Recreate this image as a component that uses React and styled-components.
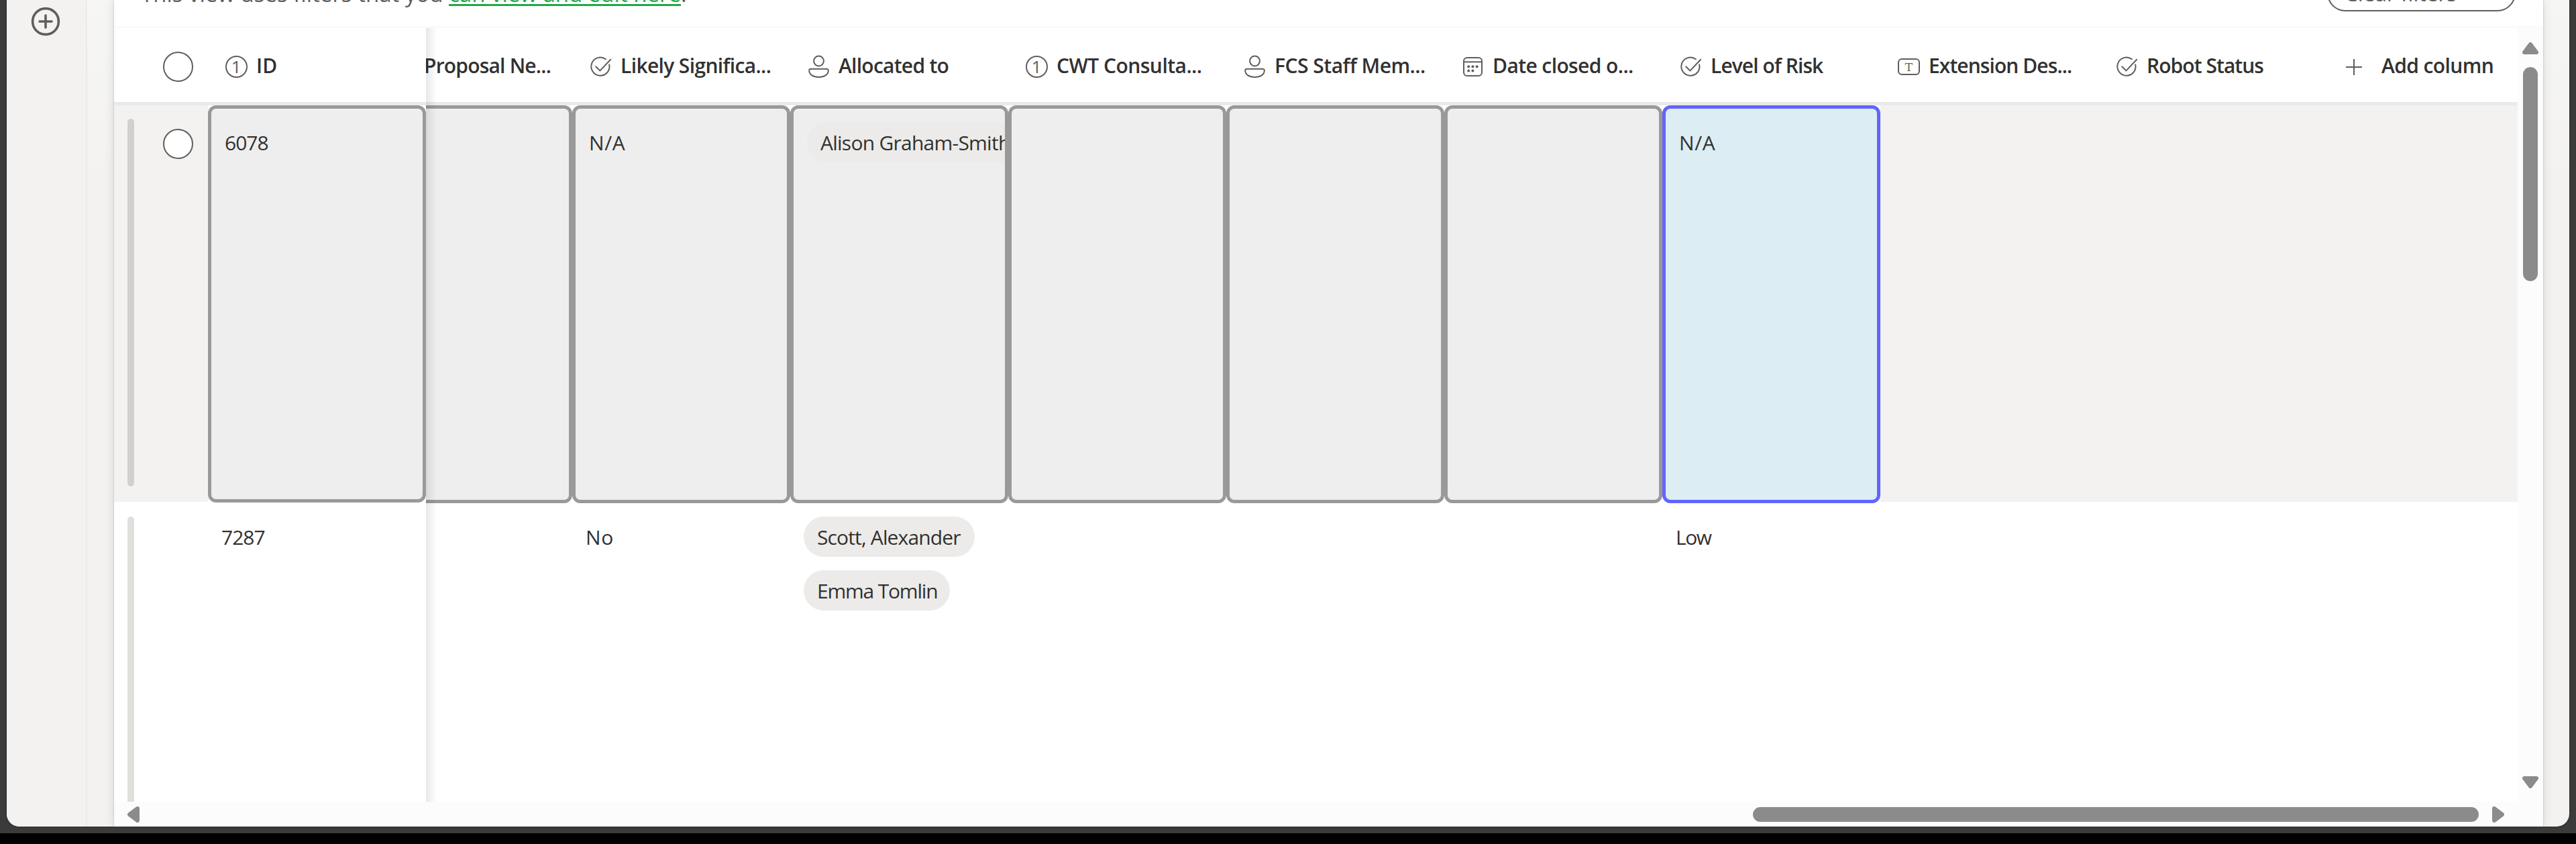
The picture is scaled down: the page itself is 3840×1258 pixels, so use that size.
import React from "react";
import styled, { createGlobalStyle } from "styled-components";

const ink = "#323130";
const muted = "#605e5c";
const surface = "#f3f2f1";

const GlobalStyle = createGlobalStyle`
  * { box-sizing: border-box; }
  body {
    margin: 0;
    background: #000;
    font-family: "Open Sans", "Noto Sans", sans-serif;
    color: ${ink};
  }
`;

const Desktop = styled.div`
  width: 3840px;
  height: 1258px;
  padding-bottom: 16px;
  background: #000;
  overflow: hidden;
`;

const Frame = styled.div`
  height: 1242px;
  padding: 0 10px 10px;
  background: #3b3b3b;
`;

const Window = styled.div`
  display: flex;
  height: 1232px;
  border-radius: 0 0 19px 19px;
  background: linear-gradient(#f6f6f4, ${surface} 260px);
  box-shadow: 0 0 3px rgba(0, 0, 0, 0.5);
  overflow: hidden;
`;

const Rail = styled.nav`
  display: flex;
  justify-content: center;
  align-items: flex-start;
  width: 120px;
  margin-right: 40px;
  padding-top: 10px;
  background: ${surface};
  border-right: 2px solid #eceae8;
`;

const Panel = styled.main`
  display: flex;
  flex-direction: column;
  width: 3621px;
  background: #fff;
  box-shadow: 0 0 2px rgba(0, 0, 0, 0.25), 0 0 14px rgba(0, 0, 0, 0.12);
`;

const FilterBar = styled.div`
  display: flex;
  justify-content: space-between;
  align-items: flex-start;
  height: 42px;
  padding: 0 41px 0 40px;
  background: linear-gradient(#fff 38px, #f7f7f7);
  overflow: hidden;
`;

const FilterText = styled.p`
  margin: -31px 0 0;
  font-size: 33px;
  line-height: 44px;
  white-space: pre;
  color: ${muted};
`;

const FilterLink = styled.a`
  display: inline-block;
  height: 40px;
  border-bottom: 3px solid #22a84b;
  color: #22a84b;
  line-height: 44px;
`;

const ClearButton = styled.button`
  width: 281px;
  height: 54px;
  margin-top: -37px;
  padding: 0 0 0 24px;
  border: 2px solid ${muted};
  border-radius: 27px;
  background: #fff;
  color: ${muted};
  font: 31.5px/48px "Open Sans", sans-serif;
  text-align: left;
`;

const Viewport = styled.div`
  display: flex;
  height: 1153px;
`;

const Sheet = styled.div`
  width: 3583px;
  height: 1153px;
  overflow: hidden;
`;

const Row = styled.div`
  display: flex;
  height: ${(p) => p.$height}px;
`;

const HeaderRow = styled(Row)`
  border-bottom: 5px solid #eaeaea;
`;

const Pinned = styled.div`
  position: relative;
  z-index: 1;
  display: flex;
  flex: none;
  width: 465px;
  &::after {
    content: "";
    position: absolute;
    top: 0;
    bottom: ${(p) => (p.$bleed ? "-5px" : 0)};
    left: 100%;
    width: 16px;
    background: linear-gradient(90deg, rgba(0, 0, 0, 0.09), rgba(0, 0, 0, 0.06) 35%, rgba(0, 0, 0, 0));
  }
`;

const Scrolled = styled.div`
  display: flex;
  flex: none;
  width: 3118px;
  overflow: hidden;
  & > :first-child { margin-left: -107px; }
`;

const Gutter = styled.div`
  display: flex;
  width: 140px;
  height: ${(p) => p.$height};
  padding-left: 20px;
  gap: 43px;
  background: ${(p) => p.$fill || "#fff"};
`;

const Marker = styled.div`
  width: 10px;
  height: ${(p) => p.$height};
  margin-top: 20px;
  border-radius: ${(p) => (p.$open ? "5px 5px 0 0" : "5px")};
  background: ${(p) => p.$color || "transparent"};
`;

const Selector = styled.span`
  width: 45px;
  height: 45px;
  margin-top: 35px;
  border: 2px solid ${muted};
  border-radius: 50%;
  background: #fff;
`;

const HeaderCell = styled.div`
  display: flex;
  flex: none;
  align-items: center;
  width: 325px;
  padding-left: ${(p) => p.$inset ?? 26}px;
  gap: ${(p) => p.$gap ?? 13}px;
`;

const HeaderLabel = styled.span`
  margin-top: 2px;
  font-size: 30px;
  font-weight: 600;
  line-height: 40px;
  letter-spacing: ${(p) => p.$track}px;
  white-space: nowrap;
`;

const Glyph = styled.svg`
  flex: none;
  display: block;
  width: ${(p) => p.$size ?? 33}px;
  height: ${(p) => p.$size ?? 33}px;
  margin-top: 5px;
  fill: none;
  stroke: ${muted};
  stroke-width: 2;
  overflow: visible;
`;

const GlyphText = styled.text`
  fill: ${muted};
  stroke: none;
  text-anchor: middle;
  font: ${(p) => p.$font};
`;

const Cell = styled.div`
  flex: none;
  width: 325px;
  height: ${(p) => p.$height || "auto"};
  padding: 20px;
  font-size: 30px;
  line-height: 62px;
  white-space: nowrap;
  overflow: hidden;
  ${(p) => p.$tone && `
    border: 5px solid ${p.$tone === "active" ? "#6464ff" : "#999"};
    border-radius: 12px;
    background: ${p.$tone === "active" ? "#dcedf3" : "#eee"};
  `}
`;

const Value = styled.div`
  letter-spacing: ${(p) => p.$track}px;
`;

const Pill = styled.div`
  width: ${(p) => (p.$width ? `${p.$width}px` : "max-content")};
  height: 60px;
  margin-bottom: 20px;
  padding: 0 20px;
  border-radius: 30px;
  background: #ecebe9;
  letter-spacing: ${(p) => p.$track}px;
`;

const RowTail = styled.div`
  width: 950px;
  height: 591px;
  background: ${surface};
`;

const VScroll = styled.div`
  display: flex;
  flex-direction: column;
  align-items: center;
  width: 38px;
  padding-top: 21px;
  background: #fcfcfc;
`;

const HScroll = styled.div`
  display: flex;
  align-items: center;
  width: 3621px;
  height: 37px;
  padding: 1px 0 0 20px;
  background: #fcfcfc;
`;

const VThumb = styled.div`
  width: 22px;
  height: 319px;
  margin: 19px 0 738px;
  border-radius: 11px;
  background: #8b8b8b;
`;

const HThumb = styled.div`
  width: 1082px;
  height: 22px;
  margin: 0 20px 0 2405px;
  border-radius: 11px;
  background: #8b8b8b;
`;

const Arrow = styled.svg`
  flex: none;
  display: block;
  fill: #8b8b8b;
  stroke: #8b8b8b;
  stroke-width: 6;
  stroke-linejoin: round;
`;

const RailIcon = styled.svg`
  width: 44px;
  height: 44px;
  margin-left: -2px;
  fill: none;
  stroke: ${muted};
  stroke-width: 3.6;
  stroke-linecap: round;
`;

const icons = {
  number: (
    <Glyph viewBox="0 0 33 33">
      <circle cx="16.5" cy="16.5" r="15.5" />
      <GlyphText x="16.2" y="25.8" $font='400 26px "Open Sans", sans-serif'>1</GlyphText>
    </Glyph>
  ),
  choice: (
    <Glyph viewBox="0 0 33 33" strokeLinecap="round">
      <path d="M24 5.2A13.6 13.6 0 1 0 29.2 13.2" />
      <path d="M9.3 16.2l6.1 6.2L31.2 5.7" />
    </Glyph>
  ),
  person: (
    <Glyph viewBox="0 0 33 33">
      <circle cx="16.5" cy="8" r="7.4" />
      <path d="M4.6 19.7h23.8a2.4 2.4 0 0 1 2.4 2.4C30.8 28.4 24.5 32 16.5 32S2.2 28.4 2.2 22.1a2.4 2.4 0 0 1 2.4-2.4z" />
    </Glyph>
  ),
  date: (
    <Glyph viewBox="0 0 33 33">
      <rect x="3" y="3" width="27" height="27" rx="5" />
      <path d="M3 9.3h27" />
      <g fill={muted} stroke="none">
        <circle cx="10.2" cy="16.3" r="2" />
        <circle cx="16.4" cy="16.3" r="2" />
        <circle cx="22.6" cy="16.3" r="2" />
        <circle cx="10.2" cy="22.6" r="2" />
        <circle cx="16.4" cy="22.6" r="2" />
      </g>
    </Glyph>
  ),
  text: (
    <Glyph viewBox="0 0 33 33">
      <rect x="1" y="5" width="31" height="23" rx="5" />
      <GlyphText x="16.5" y="22.8" $font='17px "DejaVu Serif", serif'>T</GlyphText>
    </Glyph>
  ),
  add: (
    <Glyph viewBox="0 0 24 24" $size={24}>
      <path d="M12 0v24M0 12h24" />
    </Glyph>
  ),
};

const columns = [
  { icon: "choice", label: "Proposal Ne...", track: -0.8, gap: 45 },
  { icon: "choice", label: "Likely Significa...", track: -0.64 },
  { icon: "person", label: "Allocated to", track: -0.74 },
  { icon: "number", label: "CWT Consulta...", track: -0.53 },
  { icon: "person", label: "FCS Staff Mem...", track: -0.5 },
  { icon: "date", label: "Date closed o...", track: -0.6 },
  { icon: "choice", label: "Level of Risk", track: -0.92 },
  { icon: "text", label: "Extension Des...", track: -0.93 },
  { icon: "choice", label: "Robot Status", track: -0.95 },
  { icon: "add", label: "Add column", track: -0.62, inset: 44, gap: 29 },
];

export default function App() {
  return (
    <>
      <GlobalStyle />
      <Desktop>
        <Frame>
          <Window>
            <Rail>
              <RailIcon viewBox="0 0 44 44">
                <circle cx="22" cy="22" r="19.4" />
                <path d="M22 13v18M13 22h18" />
              </RailIcon>
            </Rail>
            <Panel>
              <FilterBar>
                <FilterText>
                  This view uses filters that you <FilterLink>can view and edit here</FilterLink>.
                </FilterText>
                <ClearButton>Clear filters</ClearButton>
              </FilterBar>
              <Viewport>
                <Sheet>
                  <HeaderRow $height={115}>
                    <Pinned $bleed>
                      <Gutter $height="110px">
                        <Marker />
                        <Selector />
                      </Gutter>
                      <HeaderCell>
                        {icons.number}
                        <HeaderLabel $track={0}>ID</HeaderLabel>
                      </HeaderCell>
                    </Pinned>
                    <Scrolled>
                      {columns.map((c) => (
                        <HeaderCell key={c.label} $inset={c.inset} $gap={c.gap}>
                          {icons[c.icon]}
                          <HeaderLabel $track={c.track}>{c.label}</HeaderLabel>
                        </HeaderCell>
                      ))}
                    </Scrolled>
                  </HeaderRow>

                  <Row $height={593}>
                    <Pinned>
                      <Gutter $height="591px" $fill={surface}>
                        <Marker $height="548px" $color="#d2d0ce" />
                        <Selector />
                      </Gutter>
                      <Cell $tone="selected" $height="592px">
                        <Value $track={-1}>6078</Value>
                      </Cell>
                    </Pinned>
                    <Scrolled>
                      <Cell $tone="selected" />
                      <Cell $tone="selected">
                        <Value $track={0.6}>N/A</Value>
                      </Cell>
                      <Cell $tone="selected">
                        <Pill $track={-0.75}>Alison Graham-Smith</Pill>
                      </Cell>
                      <Cell $tone="selected" />
                      <Cell $tone="selected" />
                      <Cell $tone="selected" />
                      <Cell $tone="active">
                        <Value $track={0.6}>N/A</Value>
                      </Cell>
                      <RowTail />
                    </Scrolled>
                  </Row>

                  <Row $height={445}>
                    <Pinned>
                      <Gutter $height="445px">
                        <Marker $height="425px" $color="#e1dfdd" $open />
                      </Gutter>
                      <Cell>
                        <Value $track={-1}>7287</Value>
                      </Cell>
                    </Pinned>
                    <Scrolled>
                      <Cell />
                      <Cell>
                        <Value $track={0.6}>No</Value>
                      </Cell>
                      <Cell>
                        <Pill $track={-0.86} $width={255}>Scott, Alexander</Pill>
                        <Pill $track={-1.2} $width={218}>Emma Tomlin</Pill>
                      </Cell>
                      <Cell />
                      <Cell />
                      <Cell />
                      <Cell>
                        <Value $track={-1.5}>Low</Value>
                      </Cell>
                    </Scrolled>
                  </Row>
                </Sheet>
                <VScroll>
                  <Arrow width="24" height="18" viewBox="0 0 24 18">
                    <path d="M3 15L12 3l9 12z" />
                  </Arrow>
                  <VThumb />
                  <Arrow width="24" height="18" viewBox="0 0 24 18">
                    <path d="M3 3l9 12 9-12z" />
                  </Arrow>
                </VScroll>
              </Viewport>
              <HScroll>
                <Arrow width="18" height="24" viewBox="0 0 18 24">
                  <path d="M15 3L3 12l12 9z" />
                </Arrow>
                <HThumb />
                <Arrow width="18" height="24" viewBox="0 0 18 24">
                  <path d="M3 3l12 9-12 9z" />
                </Arrow>
              </HScroll>
            </Panel>
          </Window>
        </Frame>
      </Desktop>
    </>
  );
}
